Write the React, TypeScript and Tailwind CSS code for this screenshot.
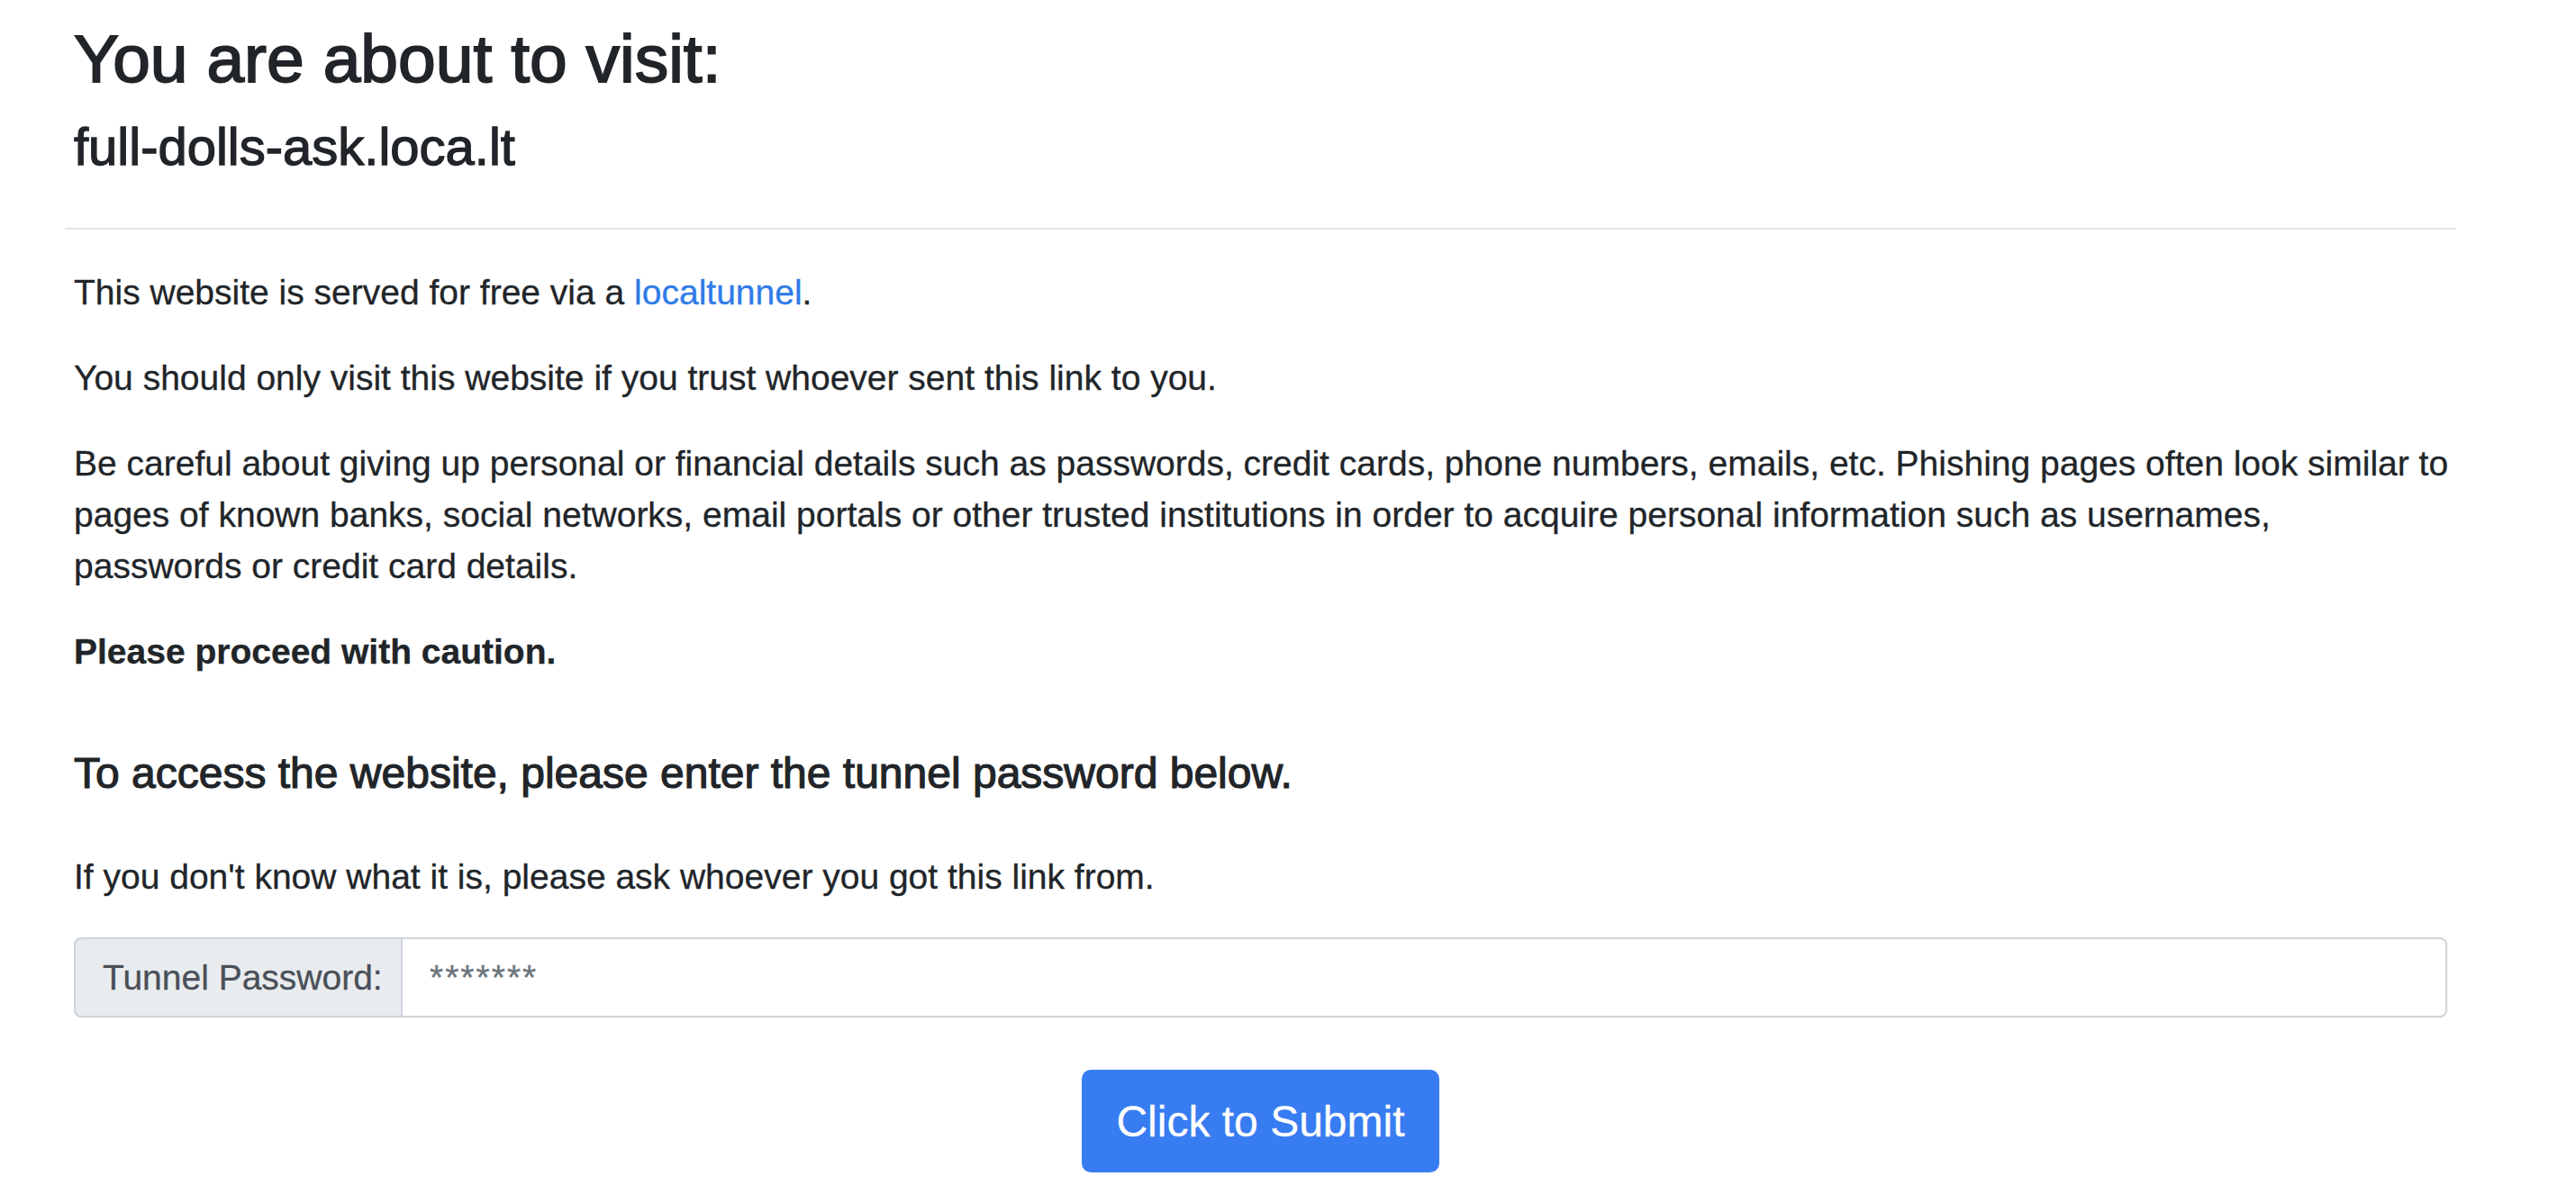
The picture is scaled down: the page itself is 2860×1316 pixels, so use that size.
import React from "react";

export default function App() {
  return (
    <div className="w-[2860px] h-[1316px] overflow-hidden bg-white text-[#212529] font-['Liberation_Sans',Arial,Helvetica,sans-serif]">
      <div className="ml-[72px] w-[2655px] pt-[21px]">
        <div className="px-[10px]">
          <h1 className="text-[75px] leading-[88px] font-normal [-webkit-text-stroke:1.8px_#212529]">
            You are about to visit:
          </h1>
          <h3 className="mt-[19px] text-[58px] leading-[70px] font-normal [-webkit-text-stroke:1.3px_#212529]">
            full-dolls-ask.loca.lt
          </h3>
        </div>
        <hr className="mt-[55px] h-[2px] border-0 bg-[#e5e5e5]" />
        <div className="px-[10px] pt-[41px] text-[39px] leading-[57px] [-webkit-text-stroke:0.3px_currentColor]">
          <p className="mb-[38px]">
            This website is served for free via a{" "}
            <a href="#" className="text-[#2f7be8]">localtunnel</a>.
          </p>
          <p className="mb-[38px]">
            You should only visit this website if you trust whoever sent this link to you.
          </p>
          <p className="mb-[38px] whitespace-nowrap">
            Be careful about giving up personal or financial details such as passwords, credit cards, phone numbers, emails, etc. Phishing pages often look similar to
            <br />
            pages of known banks, social networks, email portals or other trusted institutions in order to acquire personal information such as usernames,
            <br />
            passwords or credit card details.
          </p>
          <p>
            <strong className="font-bold">Please proceed with caution.</strong>
          </p>
          <h4 className="mt-[78px] text-[48px] leading-[58px] font-normal [-webkit-text-stroke:1.2px_#212529]">
            To access the website, please enter the tunnel password below.
          </h4>
          <p className="mt-[57px]">
            If you don't know what it is, please ask whoever you got this link from.
          </p>
          <div className="mt-[39px] flex h-[89px] w-full">
            <div className="flex w-[365px] shrink-0 items-center rounded-l-[8px] border-2 border-[#ced4da] bg-[#e9ecef] pl-[30px] text-[#495057]">
              Tunnel Password:
            </div>
            <div className="flex flex-1 items-center rounded-r-[8px] border-y-2 border-r-2 border-[#ced4da] bg-white pl-[30px] text-[#6c757d]">
              <span className="text-[39px] tracking-[2px]">*******</span>
            </div>
          </div>
          <div className="mt-[58px] flex justify-center">
            <button className="flex h-[114px] w-[397px] items-center justify-center rounded-[10px] bg-[#387cf2] text-[48px] text-white">
              Click to Submit
            </button>
          </div>
        </div>
      </div>
    </div>
  );
}
